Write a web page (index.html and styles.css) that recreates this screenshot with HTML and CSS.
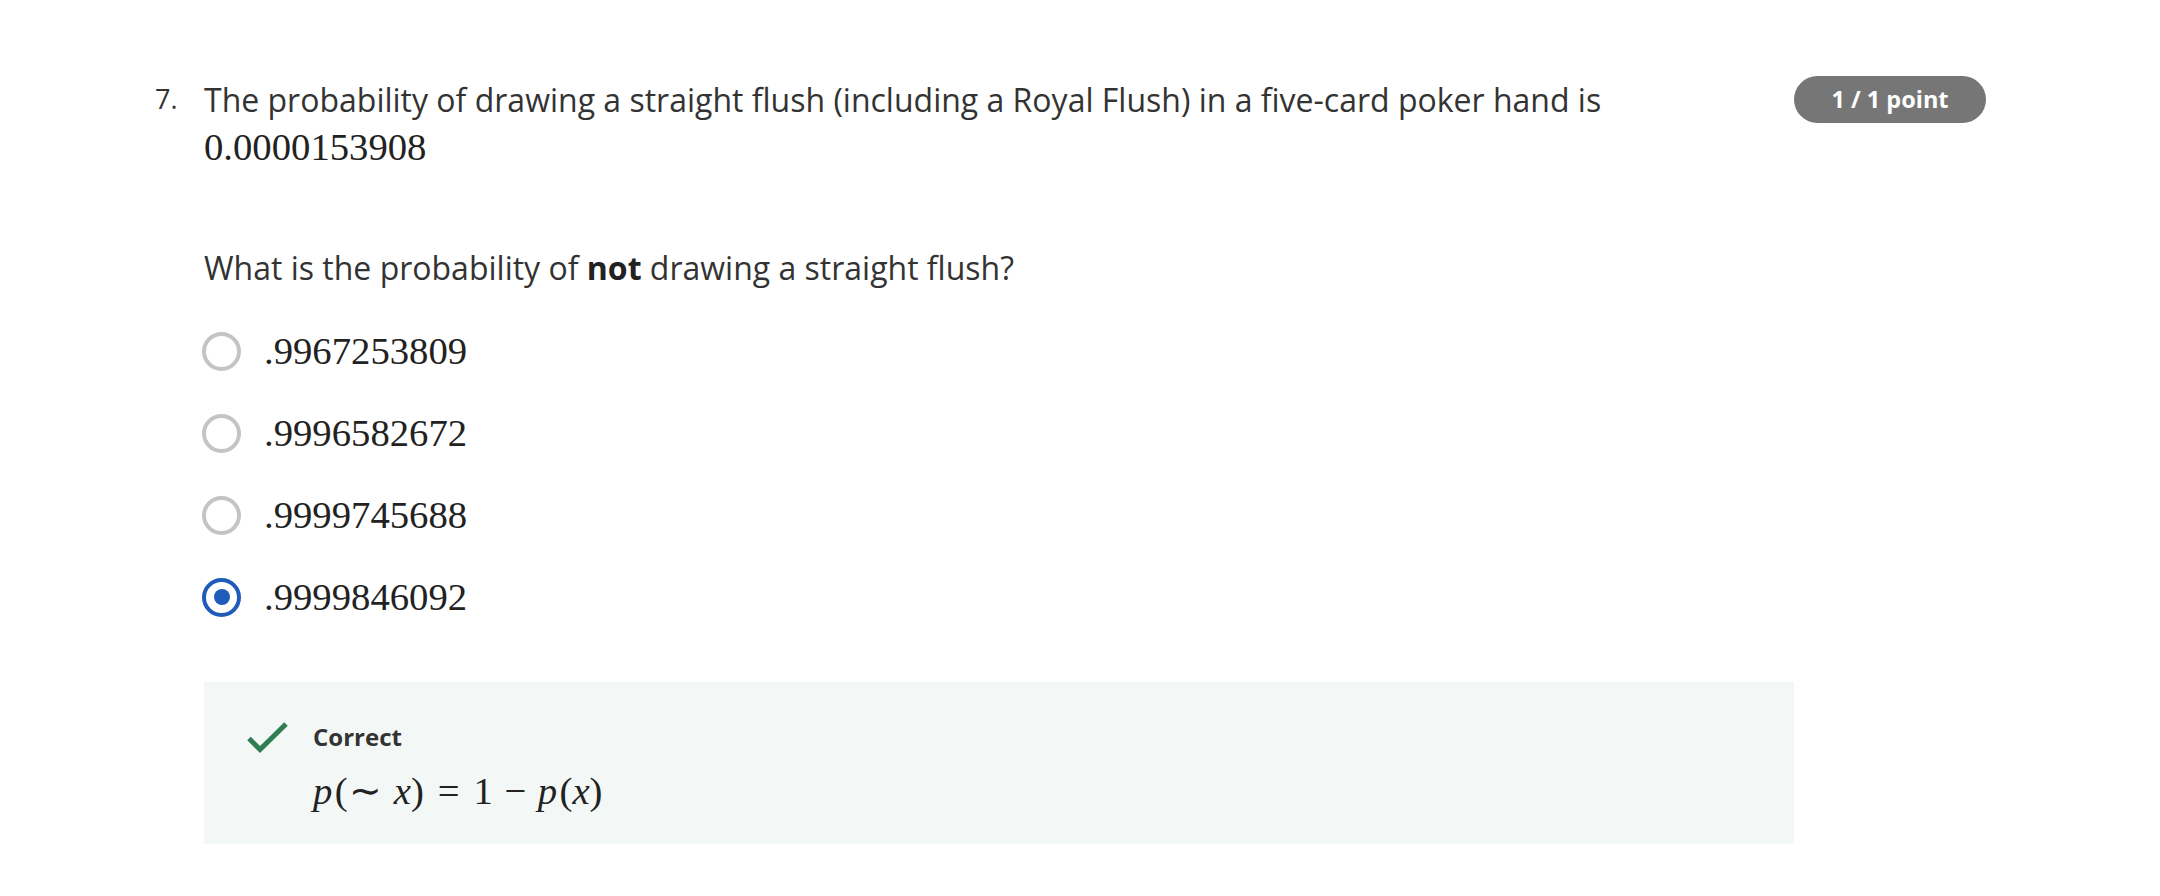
FILE: index.html
```html
<!DOCTYPE html>
<html lang="en">
<head>
<meta charset="utf-8">
<title>Question 7</title>
<link rel="stylesheet" href="styles.css">
</head>
<body>
<div class="page">
  <div class="question">
    <div class="qnum">7.</div>
    <div class="qbody">
      <p class="prompt">The probability of drawing a straight flush (including a Royal Flush) in a five-card poker hand is</p>
      <p class="prompt-math"><span class="math">0.0000153908</span></p>
      <p class="ask">What is the probability of <strong>not</strong> drawing a straight flush?</p>
      <div class="options">
        <div class="option"><span class="radio"></span><span class="math">.9967253809</span></div>
        <div class="option"><span class="radio"></span><span class="math">.9996582672</span></div>
        <div class="option"><span class="radio"></span><span class="math">.9999745688</span></div>
        <div class="option selected"><span class="radio"></span><span class="math">.9999846092</span></div>
      </div>
      <div class="feedback">
        <svg class="check" width="41" height="31" viewBox="0 0 41 31" aria-hidden="true">
          <path d="M2 16.5 L13 27.5 L39 2" fill="none" stroke="#2f7d52" stroke-width="5"/>
        </svg>
        <div class="fb-text">
          <div class="fb-title">Correct</div>
          <div class="formula math"><i class="var">p</i>(<span class="tilde">∼</span><i>x</i>)<span class="rel">=</span>1<span class="bin">−</span><i class="var">p</i>(<i>x</i>)</div>
        </div>
      </div>
    </div>
    <div class="badge">1 / 1 point</div>
  </div>
</div>
</body>
</html>
```

FILE: styles.css
```css
html, body {
  margin: 0;
  padding: 0;
  background: #ffffff;
}

body {
  font-family: "Open Sans", "Noto Sans", sans-serif;
  color: #333333;
}

.page {
  padding: 76px 0 0 155px;
}

.question {
  display: flex;
  align-items: flex-start;
}

.qnum {
  width: 49px;
  flex: none;
  font-size: 27px;
  line-height: 46px;
  color: #333333;
}

.qbody {
  width: 1590px;
  flex: none;
}

.prompt {
  margin: 0;
  font-size: 32px;
  line-height: 48px;
}

.math {
  font-family: "Liberation Serif", "Times New Roman", serif;
  font-size: 38.7px;
  color: #222222;
}

.prompt-math {
  margin: 0;
  line-height: 46px;
}

.ask {
  margin: 67px 0 0;
  font-size: 32px;
  line-height: 48px;
}

.ask strong {
  font-weight: 700;
  color: #222222;
}

.options {
  margin-top: 34px;
  display: flex;
  flex-direction: column;
  gap: 32px;
}

.option {
  display: flex;
  align-items: center;
  height: 50px;
  gap: 23px;
}

.option .math {
  line-height: 50px;
}

.radio {
  width: 39px;
  height: 39px;
  box-sizing: border-box;
  border: 4px solid #c4c4c4;
  border-radius: 50%;
  margin-left: -2px;
  flex: none;
  position: relative;
}

.option.selected .radio {
  border: 4.5px solid #1f5bb8;
}

.option.selected .radio::after {
  content: "";
  position: absolute;
  left: 50%;
  top: 50%;
  width: 16px;
  height: 16px;
  margin: -8px 0 0 -8px;
  border-radius: 50%;
  background: #1f5bb8;
}

.feedback {
  margin-top: 60px;
  height: 162px;
  box-sizing: border-box;
  background: #f3f8f6;
  padding: 40px 0 0 43px;
  display: flex;
  align-items: flex-start;
  gap: 25px;
}

.check {
  flex: none;
  display: block;
}

.fb-text {
  margin-top: -3px;
}

.fb-title {
  font-size: 24px;
  font-weight: 700;
  line-height: 36px;
  color: #333333;
}

.formula {
  margin-top: 13px;
  line-height: 46px;
  color: #222222;
  white-space: nowrap;
}

.formula i {
  font-style: italic;
}

.formula .var {
  margin-right: 0.06em;
}

.formula .tilde {
  margin: 0 0.3em 0 0.04em;
}

.formula .rel {
  margin: 0 0.36em;
}

.formula .bin {
  margin: 0 0.3em;
}

.badge {
  flex: none;
  width: 192px;
  height: 47px;
  border-radius: 24px;
  background: #767676;
  color: #ffffff;
  font-size: 23.5px;
  font-weight: 700;
  line-height: 47px;
  text-align: center;
}
```
